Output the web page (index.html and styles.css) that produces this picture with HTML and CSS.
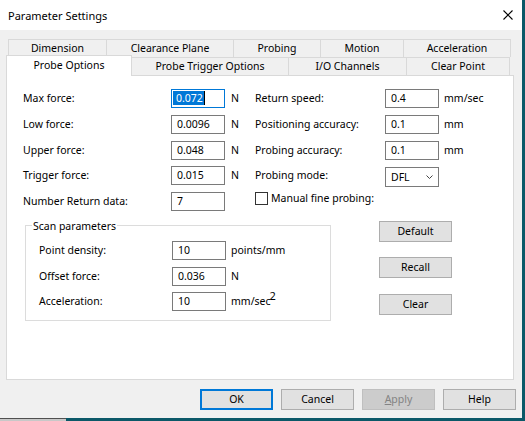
FILE: index.html
```html
<!DOCTYPE html>
<html>
<head>
<meta charset="utf-8">
<link rel="stylesheet" href="styles.css">
</head>
<body>
<div class="screen">
  <div class="window">
    <div class="titlebar">
      <span class="title">Parameter Settings</span>
      <svg class="close" width="10" height="10" viewBox="0 0 10 10"><path d="M0.5 0.5 L9.5 9.5 M9.5 0.5 L0.5 9.5" stroke="#000" stroke-width="1.1" fill="none"/></svg>
    </div>
    <div class="body">
      <div class="tabs">
        <div class="tab-row back">
          <div class="tab t-dim">Dimension</div>
          <div class="tab t-clear">Clearance Plane</div>
          <div class="tab t-prob">Probing</div>
          <div class="tab t-mot">Motion</div>
          <div class="tab t-acc last">Acceleration</div>
        </div>
        <div class="tab-row front">
          <div class="tab selected">Probe Options</div>
          <div class="tab t-trig">Probe Trigger Options</div>
          <div class="tab t-io">I/O Channels</div>
          <div class="tab t-cp">Clear Point</div>
        </div>
      </div>
      <div class="panel">
        <div class="top-grid">
          <div class="lbl">Max force:</div>
          <div class="edit focused"><span class="sel">0.072</span><span class="caret"></span></div>
          <div class="unit">N</div>
          <div class="lbl">Return speed:</div>
          <div class="edit">0.4</div>
          <div class="unit r">mm/sec</div>

          <div class="lbl">Low force:</div>
          <div class="edit">0.0096</div>
          <div class="unit">N</div>
          <div class="lbl">Positioning accuracy:</div>
          <div class="edit">0.1</div>
          <div class="unit r">mm</div>

          <div class="lbl">Upper force:</div>
          <div class="edit">0.048</div>
          <div class="unit">N</div>
          <div class="lbl">Probing accuracy:</div>
          <div class="edit">0.1</div>
          <div class="unit r">mm</div>

          <div class="lbl">Trigger force:</div>
          <div class="edit">0.015</div>
          <div class="unit">N</div>
          <div class="lbl">Probing mode:</div>
          <div class="combo"><span>DFL</span><svg width="7" height="4" viewBox="0 0 7 4"><path d="M0.5 0.5 L3.5 3.5 L6.5 0.5" stroke="#444" stroke-width="1" fill="none"/></svg></div>
          <div class="unit r"></div>

          <div class="lbl">Number Return data:</div>
          <div class="edit">7</div>
          <div class="unit"></div>
          <div class="check-row"><span class="box"></span><span>Manual fine probing:</span></div>
        </div>
        <div class="lower">
          <fieldset class="group">
            <legend>Scan parameters</legend>
            <div class="group-grid">
              <div class="lbl">Point density:</div>
              <div class="edit">10</div>
              <div class="unit">points/mm</div>
              <div class="lbl">Offset force:</div>
              <div class="edit">0.036</div>
              <div class="unit">N</div>
              <div class="lbl">Acceleration:</div>
              <div class="edit">10</div>
              <div class="unit">mm/sec<sup>2</sup></div>
            </div>
          </fieldset>
          <div class="side-buttons">
            <div class="btn">Default</div>
            <div class="btn">Recall</div>
            <div class="btn">Clear</div>
          </div>
        </div>
      </div>
      <div class="footer">
        <div class="btn default">OK</div>
        <div class="btn">Cancel</div>
        <div class="btn disabled"><u>A</u>pply</div>
        <div class="btn">Help</div>
      </div>
    </div>
  </div>
  <div class="taskbar"><div class="stub"></div></div>
</div>
</body>
</html>
```
FILE: styles.css
```css
* { box-sizing: border-box; }
html, body { margin: 0; padding: 0; }
body {
  font-family: "Noto Sans", "DejaVu Sans", sans-serif;
  font-size: 10.5px;
  line-height: 15px;
  color: #000;
  background: #0b5868;
}
.screen {
  width: 525px;
  height: 421px;
  background: #0b5868;
  overflow: hidden;
}
.window {
  width: 522px;
  height: 418px;
  background: #f0f0f0;
  display: flex;
  flex-direction: column;
}
.titlebar {
  height: 30px;
  background: #fff;
  display: flex;
  align-items: center;
  justify-content: space-between;
  padding: 0 9px 0 8px;
}
.title { font-size: 11px; }
.close { display: block; }
.body {
  padding-top: 9px;
  flex: 1;
}
.tabs { margin-left: 8px; }
.tab-row { display: flex; align-items: flex-start; }
.tab {
  height: 18px;
  border-top: 1px solid #d9d9d9;
  text-align: center;
  line-height: 17px;
  background: #f0f0f0;
  white-space: nowrap;
}
.back .tab { border-left: 1px solid #d9d9d9; }
.back .tab.last { border-right: 1px solid #d9d9d9; }
.t-dim { width: 98px; }
.t-clear { width: 127px; }
.t-prob { width: 87px; }
.t-mot { width: 83px; }
.t-acc { width: 108px; }
.front .tab { border-right: 1px solid #d9d9d9; }
.t-trig { width: 157px; }
.t-io { width: 118px; }
.t-cp { width: 103px; }
.tab.selected {
  width: 126px;
  height: 21px;
  margin: -2px 0 -1px -2px;
  border: 1px solid #d9d9d9;
  border-bottom: none;
  background: #fff;
  position: relative;
  z-index: 1;
  line-height: 18px;
}
.panel {
  margin-left: 6px;
  width: 508px;
  height: 305px;
  background: #fff;
  border: 1px solid #d9d9d9;
  padding: 13px 0 0 16px;
}
.top-grid {
  display: grid;
  grid-template-columns: 148px 54px 30px 130px 54px auto;
  grid-auto-rows: 19px;
  row-gap: 6.8px;
  align-items: center;
}
.lbl { white-space: nowrap; }
.edit {
  height: 19px;
  border: 1px solid #7a7a7a;
  background: #fff;
  padding-left: 5px;
  line-height: 16px;
  white-space: nowrap;
}
.edit.focused { border-color: #0078d7; }
.sel {
  background: #0078d7;
  color: #fff;
  padding: 0 1px 0 3px;
  margin-left: -4px;
  display: inline-block;
  line-height: 14px;
  vertical-align: top;
  margin-top: 1px;
}
.caret {
  display: inline-block;
  width: 1px;
  height: 14px;
  background: #000;
  vertical-align: top;
  margin-top: 1px;
}
.unit { padding-left: 6px; white-space: nowrap; }
.unit.r { padding-left: 5px; }
.combo {
  align-self: start;
  margin-top: 1px;
  height: 20px;
  border: 1px solid #7a7a7a;
  background: #fff;
  display: flex;
  align-items: center;
  justify-content: space-between;
  padding: 0 5px 0 5px;
}
.combo svg { display: block; }
.check-row {
  grid-column: 4 / span 3;
  display: flex;
  align-items: center;
  gap: 3px;
  align-self: start;
  margin-top: -1px;
}
.box {
  width: 13px;
  height: 13px;
  border: 1px solid #333;
  background: #fff;
  display: block;
}
.lower {
  display: flex;
  align-items: flex-start;
  margin-top: 5.5px;
}
.group {
  margin: 0 0 0 2px;
  padding: 0 0 9px 13px;
  width: 306px;
  border: 1px solid #dcdcdc;
  min-width: 0;
}
.group legend {
  margin-left: -7px;
  padding: 2px 1px 0;
  line-height: 15px;
}
.group-grid {
  display: grid;
  grid-template-columns: 133px 54px auto;
  grid-auto-rows: 19px;
  row-gap: 6.65px;
  align-items: center;
  padding-top: 7.5px;
}
.group-grid .unit { padding-left: 5px; }
sup {
  font-size: 11px;
  line-height: 0;
  vertical-align: 5px;
  margin-left: -1px;
}
.side-buttons {
  margin-left: 48px;
  margin-top: 4.5px;
  display: flex;
  flex-direction: column;
  gap: 15.2px;
}
.btn {
  width: 73px;
  height: 21px;
  background: #e1e1e1;
  border: 1px solid #adadad;
  text-align: center;
  line-height: 19px;
}
.footer {
  display: flex;
  justify-content: flex-end;
  gap: 8px;
  padding-right: 6px;
  margin-top: 9px;
}
.btn.default {
  border: 2px solid #0078d7;
  line-height: 17px;
}
.btn.disabled {
  background: #cccccc;
  border-color: #bfbfbf;
  color: #838383;
}
.btn.disabled u { text-decoration-thickness: 1px; }
.taskbar {
  height: 3px;
  display: flex;
}
.stub {
  width: 66px;
  height: 3px;
  background: #c8c8c8;
  border-top: 1px solid #505050;
}
```
